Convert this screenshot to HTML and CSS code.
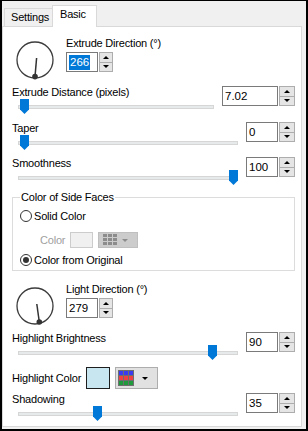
FILE: index.html
```html
<!DOCTYPE html>
<html lang="en">
<head>
<meta charset="UTF-8" />
<title>Extrude - Basic</title>
<link rel="stylesheet" href="styles.css">
</head>
<body>
<div class="window">
  <div class="tabs">
    <div class="tab">Settings</div>
    <div class="tab tab-active">Basic</div>
  </div>

  <div class="panel">
    <div class="dial-row">
      <svg class="dial" width="40" height="40" viewBox="0 0 40 40">
        <circle cx="20" cy="20" r="18" fill="none" stroke="#3c3c3c" stroke-width="1.3"/>
        <line x1="21.6" y1="18" x2="20" y2="36.6" stroke="#333" stroke-width="1.5"/>
        <circle cx="20" cy="36.6" r="2.8" fill="#333"/>
      </svg>
      <div class="dial-fields">
        <div class="label">Extrude Direction (°)</div>
        <div class="spin spin-dial">
          <span class="spin-input"><span class="selected">266</span></span>
          <span class="spin-btns"><span class="spin-up"></span><span class="spin-down"></span></span>
        </div>
      </div>
    </div>

    <div class="slider-row">
      <div class="label">Extrude Distance (pixels)</div>
      <div class="spin spin-wide">
        <span class="spin-input">7.02</span>
        <span class="spin-btns"><span class="spin-up"></span><span class="spin-down"></span></span>
      </div>
      <div class="slider"><div class="track"></div><svg class="thumb" style="left: calc(8px + (100% - 17px) * 0)" width="9" height="15" viewBox="0 0 9 15"><path d="M0 0H9V10.5L4.5 15L0 10.5Z" fill="#0078d7"/></svg></div>
    </div>

    <div class="slider-row row-taper">
      <div class="label">Taper</div>
      <div class="spin">
        <span class="spin-input">0</span>
        <span class="spin-btns"><span class="spin-up"></span><span class="spin-down"></span></span>
      </div>
      <div class="slider"><div class="track"></div><svg class="thumb" style="left: calc(8px + (100% - 17px) * 0)" width="9" height="15" viewBox="0 0 9 15"><path d="M0 0H9V10.5L4.5 15L0 10.5Z" fill="#0078d7"/></svg></div>
    </div>

    <div class="slider-row row-smooth">
      <div class="label">Smoothness</div>
      <div class="spin">
        <span class="spin-input">100</span>
        <span class="spin-btns"><span class="spin-up"></span><span class="spin-down"></span></span>
      </div>
      <div class="slider"><div class="track"></div><svg class="thumb" style="left: calc(8px + (100% - 17px) * 1)" width="9" height="15" viewBox="0 0 9 15"><path d="M0 0H9V10.5L4.5 15L0 10.5Z" fill="#0078d7"/></svg></div>
    </div>

    <fieldset class="group">
      <legend>Color of Side Faces</legend>
      <div class="radio radio-first"><span class="radio-dot"></span>Solid Color</div>
      <div class="color-row side-row">
        <span class="color-label">Color</span>
        <span class="swatch swatch-off"></span>
        <span class="pick pick-off">
          <svg width="14" height="12" viewBox="0 0 14 12">
            <g fill="#8c8c8c">
              <rect x="0" y="0" width="4" height="3"/><rect x="5" y="0" width="4" height="3"/><rect x="10" y="0" width="4" height="3"/>
              <rect x="0" y="4" width="4" height="3"/><rect x="5" y="4" width="4" height="3"/><rect x="10" y="4" width="4" height="3"/>
              <rect x="0" y="8" width="4" height="3"/><rect x="5" y="8" width="4" height="3"/><rect x="10" y="8" width="4" height="3"/>
            </g>
          </svg>
          <span class="caret caret-off"></span>
        </span>
      </div>
      <div class="radio radio-last"><span class="radio-dot radio-on"></span>Color from Original</div>
    </fieldset>

    <div class="dial-row dial-row-light">
      <svg class="dial" width="40" height="40" viewBox="0 0 40 40">
        <circle cx="20" cy="20" r="18" fill="none" stroke="#3c3c3c" stroke-width="1.3"/>
        <line x1="21.8" y1="18" x2="24.3" y2="36" stroke="#333" stroke-width="1.5"/>
        <circle cx="24.3" cy="36" r="2.8" fill="#333"/>
      </svg>
      <div class="dial-fields">
        <div class="label">Light Direction (°)</div>
        <div class="spin spin-dial">
          <span class="spin-input">279</span>
          <span class="spin-btns"><span class="spin-up"></span><span class="spin-down"></span></span>
        </div>
      </div>
    </div>

    <div class="slider-row row-bright">
      <div class="label">Highlight Brightness</div>
      <div class="spin">
        <span class="spin-input">90</span>
        <span class="spin-btns"><span class="spin-up"></span><span class="spin-down"></span></span>
      </div>
      <div class="slider"><div class="track"></div><svg class="thumb" style="left: calc(8px + (100% - 17px) * 0.9)" width="9" height="15" viewBox="0 0 9 15"><path d="M0 0H9V10.5L4.5 15L0 10.5Z" fill="#0078d7"/></svg></div>
    </div>

    <div class="color-row highlight-row">
      <span class="highlight-label">Highlight Color</span>
      <span class="swatch swatch-on"></span>
      <span class="pick">
        <svg width="16" height="16" viewBox="0 0 16 16">
          <rect width="16" height="16" fill="#6e6e6e"/>
          <g fill="#3a3af0">
            <rect x="1" y="1" width="4" height="4"/><rect x="6" y="1" width="4" height="4"/><rect x="11" y="1" width="4" height="4"/>
          </g>
          <g fill="#f04040">
            <rect x="1" y="6" width="4" height="4"/><rect x="6" y="6" width="4" height="4"/><rect x="11" y="6" width="4" height="4"/>
          </g>
          <g fill="#1f9a3c">
            <rect x="1" y="11" width="4" height="4"/><rect x="6" y="11" width="4" height="4"/><rect x="11" y="11" width="4" height="4"/>
          </g>
        </svg>
        <span class="caret"></span>
      </span>
    </div>

    <div class="slider-row row-shadow">
      <div class="label">Shadowing</div>
      <div class="spin">
        <span class="spin-input">35</span>
        <span class="spin-btns"><span class="spin-up"></span><span class="spin-down"></span></span>
      </div>
      <div class="slider"><div class="track"></div><svg class="thumb" style="left: calc(8px + (100% - 17px) * 0.35)" width="9" height="15" viewBox="0 0 9 15"><path d="M0 0H9V10.5L4.5 15L0 10.5Z" fill="#0078d7"/></svg></div>
    </div>
  </div>
</div>
</body>
</html>
```

FILE: styles.css
```css
* {
  box-sizing: border-box;
}

body {
  margin: 0;
  font-family: "Liberation Sans", Arial, sans-serif;
  font-size: 11px;
  letter-spacing: -0.2px;
  color: #000;
}

.window {
  width: 308px;
  height: 431px;
  border: solid #000;
  border-width: 1px 2px 2px 2px;
  background: #f0f0f0;
  display: flex;
  flex-direction: column;
  padding: 0 4px 2px 0;
}

/* tab strip */
.tabs {
  height: 25px;
  flex: none;
  display: flex;
  align-items: flex-end;
  padding-left: 2px;
}

.tab {
  height: 18px;
  width: 49px;
  padding-left: 6px;
  line-height: 17px;
  border: 1px solid #d9d9d9;
  border-bottom: none;
  background: #f0f0f0;
}

.tab-active {
  position: relative;
  z-index: 1;
  height: 22px;
  width: 45px;
  margin-bottom: -1px;
  margin-left: -1px;
  line-height: 17px;
  padding-left: 7px;
  background: #fff;
}

.panel {
  height: 401px;
  flex: none;
  border: 1px solid #d9d9d9;
  background: #fff;
  padding: 9px 6px 0 9px;
}

.label {
  line-height: 14px;
  white-space: nowrap;
}

/* dial blocks */
.dial-row {
  display: flex;
  align-items: flex-start;
}

.dial-row-light {
  margin-top: 11px;
}

.dial {
  display: block;
  margin: 4px 0 0 3px;
}

.dial-fields {
  margin-left: 11px;
}

.dial-fields .label {
  line-height: 15px;
}

.dial-fields .spin {
  margin-top: 1px;
}

/* spin boxes */
.spin {
  display: flex;
  width: 49px;
  height: 20px;
}

.spin-dial {
  width: 47px;
}

.spin-wide {
  width: 73px;
}

.spin-input {
  flex: 1;
  border: 1px solid #7a7a7a;
  background: #fff;
  padding-left: 2px;
  line-height: 18px;
  font-size: 11.5px;
  letter-spacing: 0;
}

.selected {
  display: inline-block;
  background: #0078d7;
  color: #fff;
  line-height: 15px;
  padding: 0 1px;
}

.spin-btns {
  width: 16px;
  margin-left: 1px;
  display: flex;
  flex-direction: column;
}

.spin-dial .spin-btns {
  width: 14px;
}

.spin-up,
.spin-down {
  flex: 1;
  border: 1px solid #adadad;
  background: #e5e5e5;
  display: flex;
  align-items: center;
  justify-content: center;
}

.spin-down {
  border-top: none;
}

.spin-up::after,
.spin-down::after {
  content: "";
  border-left: 3px solid transparent;
  border-right: 3px solid transparent;
}

.spin-up::after {
  border-bottom: 3px solid #000;
}

.spin-down::after {
  border-top: 3px solid #000;
}

/* slider rows */
.slider-row {
  display: grid;
  grid-template-columns: 1fr auto;
  grid-template-rows: 14px 16px;
  column-gap: 8px;
  margin-top: 5px;
}

.slider-row .label {
  grid-column: 1;
  grid-row: 1;
}

.slider-row .spin {
  grid-column: 2;
  grid-row: 1 / span 2;
  align-self: start;
  margin-top: 1px;
}

.row-taper {
  margin-top: 6px;
}

.row-shadow {
  margin-top: 3px;
}

.slider {
  grid-column: 1;
  grid-row: 2;
  position: relative;
  padding-top: 6px;
}

.track {
  height: 4px;
  margin-left: 6px;
  background: #e7eaea;
  border: 1px solid #d6d6d6;
}

.thumb {
  position: absolute;
  top: 0;
  display: block;
}

/* group box */
.group {
  margin: 4px 0 0;
  padding: 0 0 3px 7px;
  border: 1px solid #dcdcdc;
  min-width: 0;
}

.group legend {
  padding: 0 1px;
  line-height: 14px;
}

.radio {
  display: flex;
  align-items: center;
  height: 14px;
  gap: 2px;
}

.radio-first {
  margin-top: 5px;
}

.radio-last {
  margin-top: 5px;
}

.radio-dot {
  width: 12px;
  height: 12px;
  border: 1px solid #333;
  border-radius: 50%;
  background: #fff;
  display: flex;
  align-items: center;
  justify-content: center;
}

.radio-on::after {
  content: "";
  width: 6px;
  height: 6px;
  border-radius: 50%;
  background: #333;
}

.color-row {
  display: flex;
  align-items: center;
  height: 16px;
}

.side-row {
  margin-top: 9px;
}

.color-label {
  width: 30px;
  margin-left: 20px;
  color: #a0a0a0;
}

.swatch {
  width: 23px;
  height: 16px;
}

.swatch-off {
  background: #f0f0f0;
  border: 1px solid #cccccc;
}

.pick {
  height: 16px;
  width: 40px;
  margin-left: 5px;
  display: flex;
  align-items: center;
  background: #e1e1e1;
  border: 1px solid #adadad;
  padding-left: 4px;
}

.pick-off {
  background: #cccccc;
  border-color: #bfbfbf;
}

.caret {
  margin-left: 8px;
  border-left: 3px solid transparent;
  border-right: 3px solid transparent;
  border-top: 3px solid #000;
}

.caret-off {
  margin-left: 5px;
  border-top-color: #8c8c8c;
}

.highlight-row {
  height: 22px;
  margin-top: 6px;
}

.highlight-label {
  width: 74px;
}

.swatch-on {
  width: 24px;
  height: 22px;
  background: #c8e6f0;
  border: 1px solid #1e1e1e;
}

.highlight-row .pick {
  width: 43px;
  height: 22px;
  padding-left: 2px;
}
```
